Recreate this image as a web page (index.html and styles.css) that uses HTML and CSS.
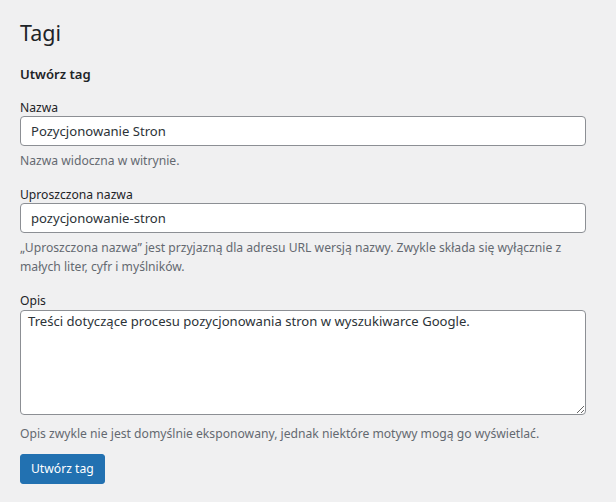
FILE: index.html
```html
<!DOCTYPE html>
<html lang="pl">
<head>
<meta charset="utf-8">
<title>Tagi</title>
<link rel="stylesheet" href="styles.css">
</head>
<body>
<div class="wrap">
  <h1 class="page-title">Tagi</h1>
  <form class="tag-form">
    <h2 class="form-title">Utwórz tag</h2>
    <div class="field">
      <label class="label" for="tag-name">Nazwa</label>
      <input class="input" id="tag-name" type="text" value="Pozycjonowanie Stron">
      <p class="desc">Nazwa widoczna w witrynie.</p>
    </div>
    <div class="field">
      <label class="label" for="tag-slug">Uproszczona nazwa</label>
      <input class="input" id="tag-slug" type="text" value="pozycjonowanie-stron">
      <p class="desc">„Uproszczona nazwa” jest przyjazną dla adresu URL wersją nazwy. Zwykle składa się wyłącznie z małych liter, cyfr i myślników.</p>
    </div>
    <div class="field">
      <label class="label" for="tag-desc">Opis</label>
      <textarea class="textarea" id="tag-desc">Treści dotyczące procesu pozycjonowania stron w wyszukiwarce Google.</textarea>
      <p class="desc desc-after-area">Opis zwykle nie jest domyślnie eksponowany, jednak niektóre motywy mogą go wyświetlać.</p>
    </div>
    <div class="actions">
      <button class="button" type="button">Utwórz tag</button>
    </div>
  </form>
</div>
</body>
</html>
```

FILE: styles.css
```css
html, body {
  margin: 0;
  padding: 0;
  background: #f0f0f1;
}
body {
  font-family: "Noto Sans", "Open Sans", sans-serif;
  font-size: 12.15px;
  line-height: 1.4;
  color: #1d2327;
}
.wrap {
  padding: 17px 30px 0 20px;
}
.page-title {
  margin: 0;
  font-size: 21.5px;
  font-weight: 400;
  line-height: 32px;
}
.tag-form {
  display: flex;
  flex-direction: column;
}
.form-title {
  margin: 15px 0 0;
  font-size: 13.1px;
  font-weight: 600;
  line-height: 20px;
}
.field {
  display: flex;
  flex-direction: column;
  margin-top: 15px;
}
.field + .field {
  margin-top: 16px;
}
.label {
  padding-top: 1px;
  line-height: 16px;
}
.input, .textarea {
  box-sizing: border-box;
  width: 100%;
  margin: 0;
  border: 1px solid #8c8f94;
  border-radius: 4px;
  background: #fff;
  color: #2c3338;
  font-family: inherit;
  font-size: 13.1px;
  padding: 0 10px;
}
.input {
  height: 30px;
  line-height: 28px;
}
.textarea {
  height: 105px;
  margin-top: 1px;
  padding: 1px 7px 0;
  line-height: 18.6px;
  resize: vertical;
}
.desc {
  margin: 5px 0 0;
  color: #646970;
  line-height: 19px;
}
.desc-after-area {
  margin-top: 9px;
}
.actions {
  margin-top: 11px;
}
.button {
  height: 30px;
  padding: 0 10px;
  border: 1px solid #2271b1;
  border-radius: 3px;
  background: #2271b1;
  color: #fff;
  font-family: inherit;
  font-size: 12.15px;
  line-height: 28px;
  cursor: pointer;
}
```
